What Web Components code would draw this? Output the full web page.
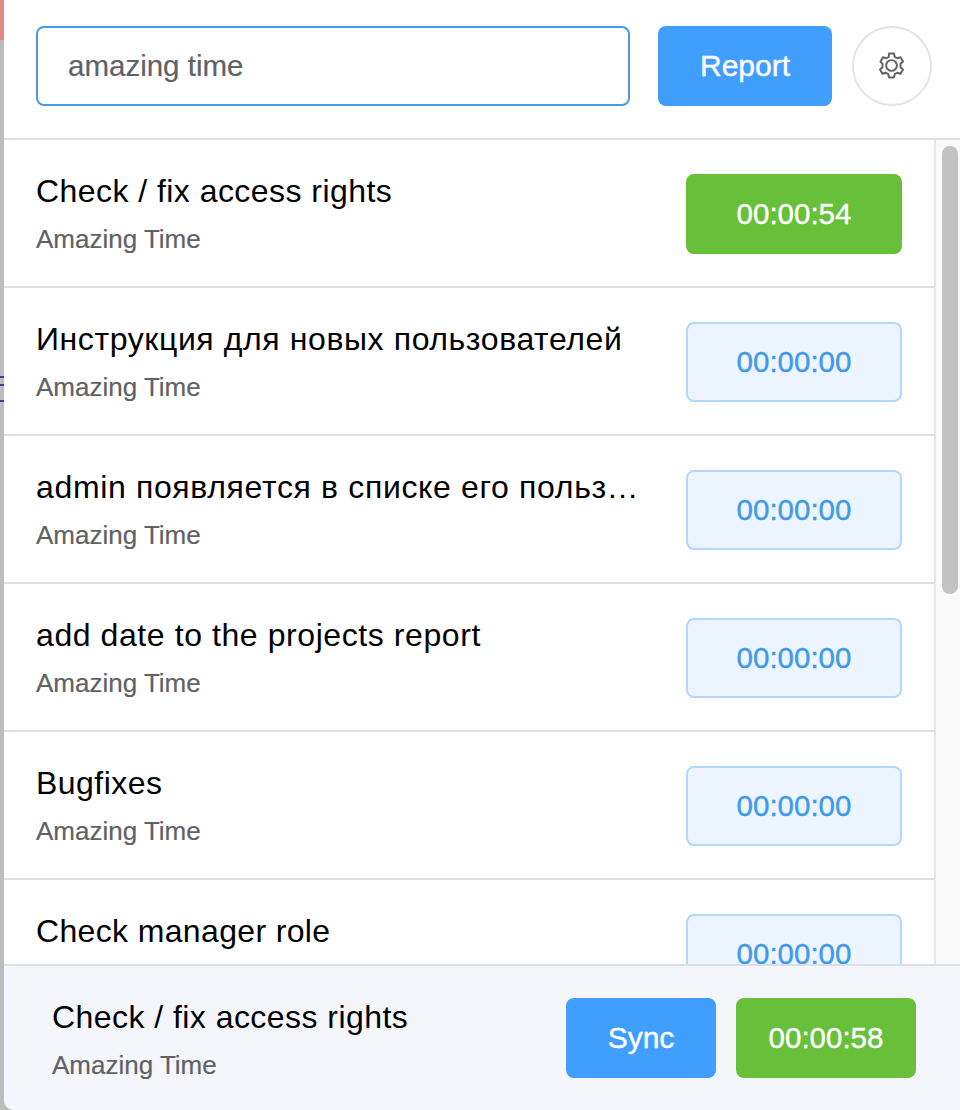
<!DOCTYPE html>
<html>
<head>
<meta charset="utf-8">
<title>Time tracker</title>
<style>
  html, body {
    margin: 0;
    height: 100%;
    overflow: hidden;
  }
  body {
    font-family: "Liberation Sans", Arial, sans-serif;
    background: #bdbdbd;
  }
</style>
</head>
<body>
<tracker-popup>
  <top-bar slot="top" value="amazing time"></top-bar>
  <task-row title-text="Check / fix access rights" project="Amazing Time" time="00:00:54" running></task-row>
  <task-row style="--title-spacing: 0.6px" title-text="Инструкция для новых пользователей" project="Amazing Time" time="00:00:00"></task-row>
  <task-row style="--title-spacing: 0.65px" title-text="admin появляется в списке его пользователей" project="Amazing Time" time="00:00:00"></task-row>
  <task-row style="--title-spacing: 0.58px" title-text="add date to the projects report" project="Amazing Time" time="00:00:00"></task-row>
  <task-row title-text="Bugfixes" project="Amazing Time" time="00:00:00"></task-row>
  <task-row style="--title-spacing: 0.35px" title-text="Check manager role" project="Amazing Time" time="00:00:00"></task-row>
  <current-task slot="bottom" title-text="Check / fix access rights" project="Amazing Time" time="00:00:58"></current-task>
</tracker-popup>

<script>
// Outer window: the strip on the left is the page behind the popup.
class TrackerPopup extends HTMLElement {
  constructor() {
    super();
    this.attachShadow({ mode: "open" });
  }

  connectedCallback() {
    this.shadowRoot.innerHTML = `
      <style>
        :host {
          display: flex;
          height: 1110px;
          width: 960px;
        }
        .behind {
          flex: 0 0 4px;
          display: flex;
          flex-direction: column;
          background: #bdbdbd;
        }
        .behind .red {
          height: 40px;
          background: #e08a88;
        }
        .behind .lines {
          margin-top: 336px;
          height: 27px;
          background:
            linear-gradient(#2f3fb0, #2f3fb0) 0 0 / 100% 2px no-repeat,
            linear-gradient(#2f3fb0, #2f3fb0) 0 8px / 100% 2px no-repeat,
            linear-gradient(#2f3fb0, #2f3fb0) 0 24px / 100% 2px no-repeat;
        }
        .popup {
          flex: 1;
          min-width: 0;
          display: flex;
          flex-direction: column;
          background: #fff;
          border-bottom-left-radius: 10px;
          overflow: hidden;
        }
        .middle {
          flex: 1;
          min-height: 0;
          display: flex;
        }
        .list {
          flex: 1;
          min-width: 0;
          overflow: hidden;
        }
        .track {
          flex: 0 0 26px;
          box-sizing: border-box;
          border-left: 2px solid #e6e6e6;
          background: #fafafa;
          padding: 6px 2px 0 6px;
        }
        .thumb {
          height: 448px;
          border-radius: 8px;
          background: #c2c2c2;
        }
      </style>
      <div class="behind"><div class="red"></div><div class="lines"></div></div>
      <div class="popup">
        <slot name="top"></slot>
        <div class="middle">
          <div class="list"><slot></slot></div>
          <div class="track"><div class="thumb"></div></div>
        </div>
        <slot name="bottom"></slot>
      </div>
    `;
  }
}

class TopBar extends HTMLElement {
  constructor() {
    super();
    this.attachShadow({ mode: "open" });
  }

  connectedCallback() {
    this.shadowRoot.innerHTML = `
      <style>
        :host {
          display: flex;
          align-items: flex-start;
          height: 140px;
          box-sizing: border-box;
          padding: 26px 28px 0 32px;
          border-bottom: 2px solid #dcdfe6;
        }
        input {
          flex: 1;
          min-width: 0;
          height: 80px;
          box-sizing: border-box;
          padding: 0 30px;
          border: 2px solid #4d9ae4;
          border-radius: 8px;
          outline: none;
          font: 29.5px "Liberation Sans", Arial, sans-serif;
          -webkit-text-stroke: 0.2px #606266;
          color: #606266;
          background: #fff;
        }
        .report {
          flex: 0 0 174px;
          height: 80px;
          margin-left: 28px;
          border: 0;
          border-radius: 8px;
          background: #409eff;
          color: #fff;
          font: 30px "Liberation Sans", Arial, sans-serif;
          -webkit-text-stroke: 0.4px #fff;
        }
        .settings {
          flex: 0 0 80px;
          height: 80px;
          margin-left: 20px;
          padding: 0 1px 2px 0;
          display: flex;
          align-items: center;
          justify-content: center;
          border: 2px solid #e4e4e4;
          border-radius: 50%;
          background: #fff;
        }
        svg {
          display: block;
        }
      </style>
      <input type="text">
      <button class="report">Report</button>
      <button class="settings" aria-label="Settings">
        <svg width="29" height="29" viewBox="0 0 28 28" fill="none" stroke="#606266" stroke-width="1.9" stroke-linejoin="round">
          <circle cx="14" cy="14" r="5.2"/>
          <path d="M11.6 2.4h4.8l.7 3.2 2.5 1.4 3.1-1 2.4 4.2-2.4 2.2v3.2l2.4 2.2-2.4 4.2-3.1-1-2.5 1.4-.7 3.2h-4.8l-.7-3.2-2.5-1.4-3.1 1-2.4-4.2 2.4-2.2v-3.2L3.4 10.2l2.4-4.2 3.1 1 2.5-1.4z"/>
        </svg>
      </button>
    `;
    this.shadowRoot.querySelector("input").value = this.getAttribute("value");
  }
}

class TaskRow extends HTMLElement {
  constructor() {
    super();
    this.attachShadow({ mode: "open" });
  }

  connectedCallback() {
    const running = this.hasAttribute("running");
    this.shadowRoot.innerHTML = `
      <style>
        :host {
          display: flex;
          align-items: flex-start;
          height: 148px;
          box-sizing: border-box;
          padding: 34px 32px 0 32px;
          border-bottom: 2px solid #dcdfe6;
        }
        .text {
          flex: 1;
          min-width: 0;
          margin-right: 44px;
        }
        .name {
          margin-top: -1px;
          font-size: 32px;
          letter-spacing: var(--title-spacing, 0.45px);
          line-height: 36px;
          color: #000;
          white-space: nowrap;
          overflow: hidden;
          text-overflow: ellipsis;
        }
        .project {
          margin-top: 15px;
          font-size: 26px;
          line-height: 30px;
          color: #606266;
          -webkit-text-stroke: 0.2px #606266;
        }
        .time {
          flex: 0 0 216px;
          height: 80px;
          box-sizing: border-box;
          padding-bottom: 1px;
          display: flex;
          align-items: center;
          justify-content: center;
          border-radius: 8px;
          font-size: 29.5px;
          color: #3f9aea;
          -webkit-text-stroke: 0.4px #3f9aea;
          background: #ecf5ff;
          border: 2px solid #b3d8ff;
        }
        .time.running {
          color: #fff;
          -webkit-text-stroke: 0.4px #fff;
          background: #67bf3a;
          border-color: #67bf3a;
        }
      </style>
      <div class="text">
        <div class="name">${this.getAttribute("title-text")}</div>
        <div class="project">${this.getAttribute("project")}</div>
      </div>
      <div class="time ${running ? "running" : ""}">${this.getAttribute("time")}</div>
    `;
  }
}

class CurrentTask extends HTMLElement {
  constructor() {
    super();
    this.attachShadow({ mode: "open" });
  }

  connectedCallback() {
    this.shadowRoot.innerHTML = `
      <style>
        :host {
          display: flex;
          align-items: flex-start;
          height: 146px;
          box-sizing: border-box;
          padding: 32px 44px 0 48px;
          background: #f4f6fb;
          border-top: 2px solid #dcdfe6;
        }
        .text {
          flex: 1;
          min-width: 0;
        }
        .name {
          margin-top: 1px;
          font-size: 32px;
          letter-spacing: 0.45px;
          line-height: 36px;
          color: #000;
          white-space: nowrap;
        }
        .project {
          margin-top: 15px;
          font-size: 26px;
          line-height: 30px;
          color: #606266;
          -webkit-text-stroke: 0.2px #606266;
        }
        .sync, .time {
          height: 80px;
          display: flex;
          align-items: center;
          justify-content: center;
          border-radius: 8px;
          color: #fff;
          -webkit-text-stroke: 0.4px #fff;
        }
        .sync {
          flex: 0 0 150px;
          background: #409eff;
          font-size: 30px;
        }
        .time {
          flex: 0 0 180px;
          margin-left: 20px;
          box-sizing: border-box;
          padding-bottom: 1px;
          background: #67bf3a;
          font-size: 29.5px;
        }
      </style>
      <div class="text">
        <div class="name">${this.getAttribute("title-text")}</div>
        <div class="project">${this.getAttribute("project")}</div>
      </div>
      <div class="sync">Sync</div>
      <div class="time">${this.getAttribute("time")}</div>
    `;
  }
}

customElements.define("tracker-popup", TrackerPopup);
customElements.define("top-bar", TopBar);
customElements.define("task-row", TaskRow);
customElements.define("current-task", CurrentTask);
</script>
</body>
</html>
